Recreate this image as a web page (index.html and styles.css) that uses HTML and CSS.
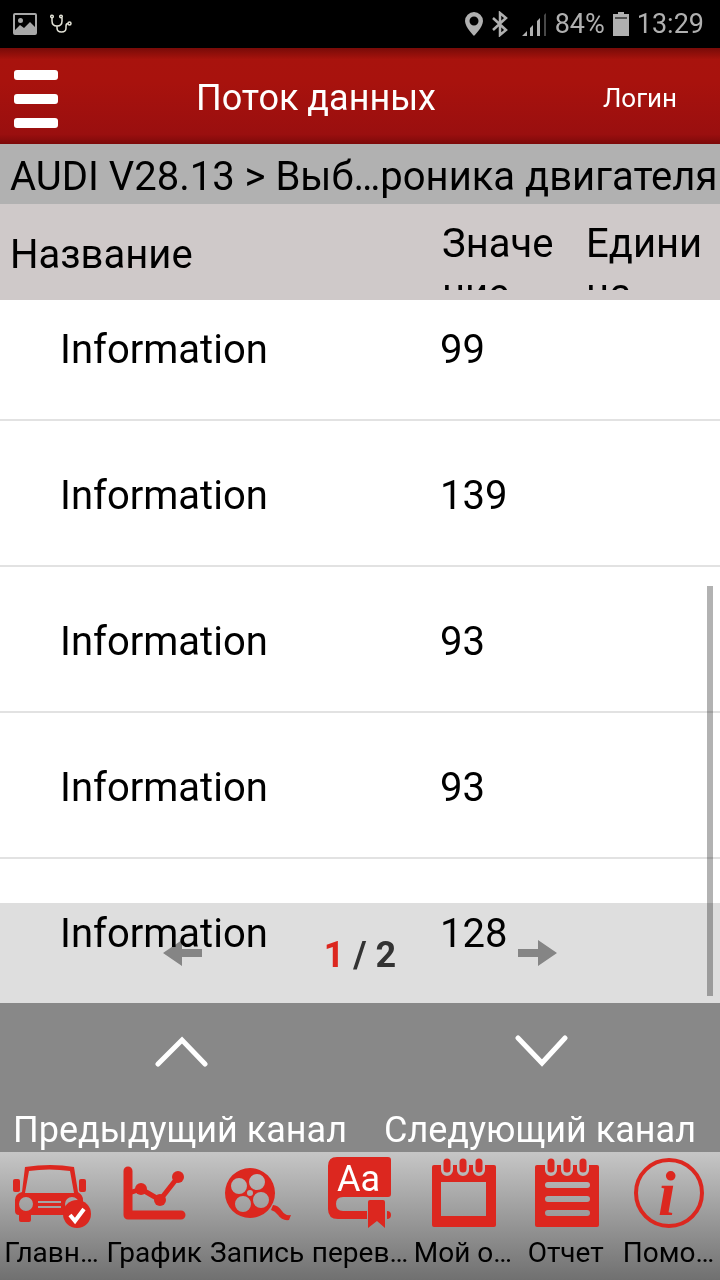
FILE: index.html
```html
<!DOCTYPE html>
<html lang="ru">
<head>
    <meta charset="UTF-8">
    <meta name="viewport" content="width=device-width, initial-scale=1.0">
    <title>Поток данных</title>
    <link rel="stylesheet" href="styles.css">
</head>
<body>

    <div class="status-bar">
        <div class="status-left">
            <svg width="24" height="22" viewBox="0 0 24 22"><path fill="#a8a8a8" fill-rule="evenodd" d="M2 0h20q2 0 2 2v18q0 2-2 2H2q-2 0-2-2V2q0-2 2-2zM2 2v15l5-5 4 3 6-6 5 5V2zM7.500 5a2.500 2.500 0 1 1 0 5 2.500 2.500 0 0 1 0-5z"/></svg>
            <svg width="22" height="20" viewBox="0 0 22 20" fill="none" stroke="#e4e4d8" stroke-width="1.500"><path d="M2 4v3q0 5 5 5t5-5V4M7 12v2q0 4 4.500 4t4.500-4v-2q0-2.500 2-2.500"/><circle cx="2" cy="2.500" r="1.300"/><circle cx="11" cy="2.500" r="1.300"/><circle cx="19.500" cy="9.500" r="1.500"/></svg>
        </div>
        <div class="status-right">
            <svg width="18" height="24" viewBox="0 0 18 24"><path fill="#b0b0b0" fill-rule="evenodd" d="M9 0a9 9 0 0 1 9 9c0 6-9 15-9 15S0 15 0 9a9 9 0 0 1 9-9zm0 4.500a4.500 4.500 0 1 0 0 9 4.500 4.500 0 0 0 0-9z"/></svg>
            <svg width="18" height="26" viewBox="0 0 18 26" fill="none" stroke="#b0b0b0" stroke-width="2.500"><path d="M2 7l13 12-6 5V2l6 5L2 19"/></svg>
            <svg class="signal" width="26" height="26" viewBox="0 0 26 26" fill="#b0b0b0"><path d="M1 25l5-5v5zM9 17l3-3v11H9zM16 10l3-3v18h-3z"/><path fill="#484848" d="M23 4l2-2v23h-2z"/></svg>
            <span>84%</span>
            <svg width="16" height="24" viewBox="0 0 16 24" fill="#b0b0b0"><path d="M5 0h6v2h5v22H0V2h5z"/><path fill="#505050" d="M2 5h12v2H2z"/></svg>
            <span>13:29</span>
        </div>
    </div>

    <header class="header">
        <button class="menu-button" aria-label="Меню">
            <span></span>
            <span></span>
            <span></span>
        </button>
        <h1>Поток данных</h1>
        <button class="login">Логин</button>
    </header>

    <div class="path">AUDI V28.13 &gt; Выб…роника двигателя</div>

    <main class="stream">
        <table class="data">
            <thead>
                <tr>
                    <th class="name">Название</th>
                    <th>Значе<br>ние</th>
                    <th>Едини<br>ца</th>
                </tr>
            </thead>
            <tbody>
                <tr><td>Information</td><td>99</td><td></td></tr>
                <tr><td>Information</td><td>139</td><td></td></tr>
                <tr><td>Information</td><td>93</td><td></td></tr>
                <tr><td>Information</td><td>93</td><td></td></tr>
                <tr><td>Information</td><td>128</td><td></td></tr>
            </tbody>
        </table>
        <div class="pager">
            <button aria-label="Назад">
                <svg width="40" height="26" viewBox="0 0 40 26"><path fill="#858585" d="M0 13L19 0v9h20v8H19v9z"/></svg>
            </button>
            <div class="pages"><span class="current">1</span> / 2</div>
            <button aria-label="Вперёд">
                <svg width="40" height="26" viewBox="0 0 40 26"><path fill="#858585" d="M40 13L21 0v9H1v8h20v9z"/></svg>
            </button>
        </div>
        <div class="scrollbar"></div>
    </main>

    <div class="channels">
        <button>
            <svg width="56" height="34" viewBox="0 0 56 34"><path d="M6 29L30 5l23 24"/></svg>
            <span>Предыдущий канал</span>
        </button>
        <button>
            <svg width="56" height="34" viewBox="0 0 56 34"><path d="M6 3l24 25L53 3"/></svg>
            <span>Следующий канал</span>
        </button>
    </div>

    <nav class="tabs">
        <a href="#">
            <!-- car -->
            <svg viewBox="0 0 102 80" fill="#dc271f">
                <path fill-rule="evenodd" d="M25 15q26-4 49 0l4 25q5 3 5 8v12q0 3-3 3H31v5q0 2-2 2h-8q-2 0-2-2v-5q-4 0-4-4V48q0-6 7-8zM29 19l-4 22h49l-4-22q-21-3-41 0zM26 45a7 7 0 1 0 0 14 7 7 0 0 0 0-14zM38 49v2h23v-2zM38 54v2h23v-2zM72 45a7 7 0 1 0 0 14 7 7 0 0 0 0-14z"/>
                <rect x="13" y="27" width="7" height="13" rx="2"/>
                <rect x="79" y="27" width="7" height="13" rx="2"/>
                <circle cx="77" cy="62" r="14"/>
                <path fill="none" stroke="#fff" stroke-width="4" d="M70 63l5 6 9-12"/>
            </svg>
            <span>Главн…</span>
        </a>
        <a href="#">
            <!-- graph -->
            <svg viewBox="0 0 102 80" fill="none" stroke="#dc271f" stroke-linecap="round" stroke-linejoin="round">
                <path stroke-width="9" d="M25 19v44h53"/>
                <path stroke-width="5" d="M26 41l12-4 19 11 18-23"/>
                <g fill="#dc271f" stroke="none"><circle cx="38" cy="37" r="6"/><circle cx="57" cy="48" r="6"/><circle cx="75" cy="25" r="6"/></g>
            </svg>
            <span>График</span>
        </a>
        <a href="#">
            <!-- film reel -->
            <svg viewBox="0 0 102 80" fill="#dc271f">
                <path fill-rule="evenodd" d="M44 16a25 25 0 1 1 0 50 25 25 0 0 1 0-50zM33 26a8 8 0 1 0 0 16 8 8 0 0 0 0-16zM51 22a8 8 0 1 0 0 16 8 8 0 0 0 0-16zM55 40a8 8 0 1 0 0 16 8 8 0 0 0 0-16zM37 44a8 8 0 1 0 0 16 8 8 0 0 0 0-16zM44 38a3 3 0 1 0 0 6 3 3 0 0 0 0-6z"/>
                <path d="M67 53q5 0 9 6 3 5 9 4l-2 5q-7 1-11-5-3-4-7-5z"/>
            </svg>
            <span>Запись</span>
        </a>
        <a href="#">
            <!-- dictionary -->
            <svg viewBox="0 0 102 80" fill="#dc271f">
                <path d="M28 5h51q3 0 3 3v34q0 3-3 3H34q-7 0-7 7t7 7h24v8H29q-10 0-10-10V14q0-9 9-9z"/>
                <path d="M61 48h13q2 0 2 2v26l-8-7-9 7V50q0-2 2-2zM78 59q4 0 4 4t-4 4z"/>
                <text class="letters" x="28" y="39">Aa</text>
            </svg>
            <span>перев…</span>
        </a>
        <a href="#">
            <!-- notepad -->
            <svg viewBox="0 0 102 80" fill="#dc271f">
                <defs>
                    <mask id="rings">
                        <rect width="102" height="80" fill="#fff"/>
                        <path stroke="#000" stroke-width="12" stroke-linecap="round" d="M35 6v12M51 6v12M67 6v12"/>
                    </mask>
                </defs>
                <path mask="url(#rings)" fill-rule="evenodd" d="M22 13h60q2 0 2 2v58q0 2-2 2H22q-2 0-2-2V15q0-2 2-2zM29 30v34h45V30z"/>
                <path stroke="#dc271f" stroke-width="7" stroke-linecap="round" d="M35 10v7M51 10v7M67 10v7"/>
            </svg>
            <span>Мой о…</span>
        </a>
        <a href="#">
            <!-- report -->
            <svg viewBox="0 0 102 80" fill="#dc271f">
                <defs>
                    <mask id="lines">
                        <rect width="102" height="80" fill="#fff"/>
                        <path stroke="#000" stroke-width="12" stroke-linecap="round" d="M36 6v12M52 6v12M68 6v12"/>
                        <path stroke="#000" stroke-width="6" stroke-linecap="round" d="M33 33h39M33 47h39M33 61h39"/>
                    </mask>
                </defs>
                <rect mask="url(#lines)" x="20" y="13" width="64" height="62" rx="2"/>
                <path stroke="#dc271f" stroke-width="7" stroke-linecap="round" d="M36 10v7M52 10v7M68 10v7"/>
            </svg>
            <span>Отчет</span>
        </a>
        <a href="#">
            <!-- help -->
            <svg viewBox="0 0 102 80" fill="#dc271f">
                <circle cx="51" cy="41" r="33" fill="none" stroke="#dc271f" stroke-width="4"/>
                <text class="info" x="49" y="63" text-anchor="middle">i</text>
            </svg>
            <span>Помо…</span>
        </a>
    </nav>

</body>
</html>
```
FILE: styles.css
```css
* {
    box-sizing: border-box;
}
body {
    margin: 0;
    height: 100vh;
    display: flex;
    flex-direction: column;
    overflow: hidden;
    font-family: Roboto, "Noto Sans", sans-serif;
    font-size: 40px;
    color: #000000;
    background-color: #ffffff;
}
button {
    border: none;
    padding: 0;
    background: none;
    font-family: inherit;
    color: inherit;
    cursor: pointer;
}
svg {
    display: block;
    flex-shrink: 0;
}
.status-bar {
    display: flex;
    justify-content: space-between;
    align-items: center;
    flex-shrink: 0;
    height: 48px;
    padding: 0 16px 0 13px;
    background-color: #000000;
    color: #b0b0b0;
    font-size: 27px;
}
.status-left {
    display: flex;
    align-items: center;
    gap: 13px;
}
.status-right {
    display: flex;
    align-items: center;
    gap: 8px;
}
.signal {
    margin-left: 4px;
}
.header {
    display: flex;
    align-items: center;
    flex-shrink: 0;
    height: 96px;
    padding-top: 3px;
    color: #ffffff;
    background-image: linear-gradient(#780b08, #a8130d 12%, #a8120d 35%, #9a0f0f 90%, #7c0909);
}
.menu-button {
    display: flex;
    flex-direction: column;
    gap: 14px;
    width: 72px;
    padding: 2px 14px 0;
}
.menu-button span {
    height: 10px;
    border-radius: 3px;
    background-color: #ffffff;
}
.header h1 {
    flex: 1;
    margin: 0;
    text-align: center;
    font-size: 36px;
    font-weight: normal;
}
.login {
    width: 160px;
    font-size: 26px;
}
.path {
    flex-shrink: 0;
    height: 60px;
    padding-left: 10px;
    line-height: 66px;
    white-space: nowrap;
    overflow: hidden;
    background-color: #b1b1b1;
}
.stream {
    position: relative;
    flex: 1;
    min-height: 0;
}
.data {
    display: flex;
    flex-direction: column;
    height: 100%;
}
.data thead {
    display: block;
    background-color: #cfc9c9;
}
.data tr {
    display: grid;
    grid-template-columns: 3fr 1fr 1fr;
}
.data thead tr {
    height: 96px;
    padding: 10px 0;
}
.data th {
    padding: 5px 0 0 10px;
    overflow: hidden;
    text-align: left;
    font-weight: normal;
    line-height: 50px;
}
.data .name {
    line-height: 72px;
}
/* the list is scrolled to its end */
.data tbody {
    display: flex;
    flex-direction: column;
    justify-content: flex-end;
    flex: 1;
    min-height: 0;
    overflow: hidden;
}
.data tbody tr {
    flex-shrink: 0;
    height: 146px;
    border-bottom: 2px solid #e2e2e2;
    line-height: 150px;
}
.data tbody tr:last-child {
    height: 144px;
    border-bottom: none;
}
.data td {
    padding: 0 0 0 8px;
}
.data td:first-child {
    padding-left: 60px;
}
.pager {
    position: absolute;
    left: 0;
    right: 0;
    bottom: 0;
    display: flex;
    justify-content: center;
    align-items: center;
    gap: 121px;
    height: 100px;
    background-color: rgba(0, 0, 0, 0.13);
    mix-blend-mode: multiply;
}
.pages {
    padding-top: 3px;
    font-size: 36px;
    font-weight: bold;
    color: #333333;
}
.current {
    color: #dc271f;
}
.scrollbar {
    position: absolute;
    right: 7px;
    bottom: 7px;
    width: 6px;
    height: 410px;
    background-color: rgba(0, 0, 0, 0.3);
}
.channels {
    display: grid;
    grid-template-columns: 1fr 1fr;
    flex-shrink: 0;
    background-color: #888888;
    color: #ffffff;
}
.channels button {
    display: flex;
    flex-direction: column;
    align-items: center;
    gap: 40px;
    padding-top: 32px;
    font-size: 36px;
    line-height: 43px;
    white-space: nowrap;
}
.channels path {
    fill: none;
    stroke: #ffffff;
    stroke-width: 5;
    stroke-linecap: round;
}
.tabs {
    display: grid;
    grid-template-columns: repeat(7, 1fr);
    flex-shrink: 0;
    height: 128px;
    background-image: linear-gradient(#c6c6c6, #707070);
}
.tabs a {
    display: flex;
    flex-direction: column;
    align-items: center;
    min-width: 0;
    color: #000000;
    font-size: 28px;
    line-height: 42px;
    white-space: nowrap;
    text-decoration: none;
}
.tabs svg {
    width: 102px;
    height: 80px;
}
.letters {
    font-size: 36px;
    fill: #ffffff;
}
.info {
    font-family: "Liberation Serif", serif;
    font-size: 64px;
    font-style: italic;
    font-weight: bold;
}
```
